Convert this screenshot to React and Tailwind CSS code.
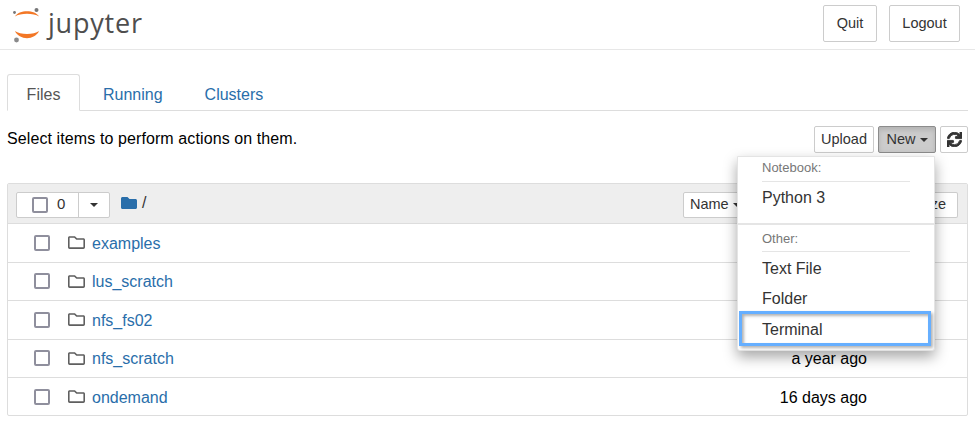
import { FaFolder, FaRegFolder, FaSync } from 'react-icons/fa';

const FOLDERS = [
  { name: 'examples' },
  { name: 'lus_scratch' },
  { name: 'nfs_fs02' },
  { name: 'nfs_scratch', modified: 'a year ago' },
  { name: 'ondemand', modified: '16 days ago' },
];

function Caret() {
  return (
    <span className="inline-block w-0 h-0 border-x-[4.5px] border-x-transparent border-t-[4.5px] border-t-current" />
  );
}

function Checkbox({ className = '' }) {
  return (
    <input
      type="checkbox"
      className={`appearance-none block w-4 h-4 border-2 border-[#8f8f9d] rounded-[2px] bg-white ${className}`}
    />
  );
}

function Logo() {
  return (
    <div className="flex items-center h-full">
      <svg className="w-[30px] h-[37px] ml-3 shrink-0" viewBox="12 5 30 37">
        <path d="M15 15.5 C19 8.5 35 8.5 39 15.5 C34 11.8 20 11.8 15 15.5 Z" fill="#f37726" />
        <path d="M15 30 C20 34 34 34 39 30 C35 39.5 19 39.5 15 30 Z" fill="#f37726" />
        <circle cx="36.5" cy="9" r="2" fill="#767677" />
        <circle cx="14.5" cy="11.5" r="1.4" fill="#767677" />
        <circle cx="16.5" cy="39" r="2.4" fill="#8a8a8b" />
      </svg>
      <span className="ml-[6px] -mt-[4px] font-['Open_Sans',sans-serif] text-[27px] leading-none tracking-[0.8px] text-[#4e4e4e]">
        jupyter
      </span>
    </div>
  );
}

function NewMenu() {
  return (
    <div className="absolute left-[737px] top-[156px] w-[198px] h-[195px] bg-white border border-[#e4e4e4] rounded-b-[3px] shadow-[0_6px_14px_rgba(0,0,0,0.35)] z-10">
      <div className="px-6 h-[24px] pt-[2px] text-[13px] leading-[18px] text-[#777]">Notebook:</div>
      <div className="mx-6 border-t border-[#e5e5e5]" />
      <div className="px-6 h-[41px] pt-[5px] text-[16px] leading-[22px] text-[#333]">Python 3</div>
      <div className="border-t-2 border-[#e5e5e5]" />
      <div className="px-6 h-[26px] pt-[5px] text-[13px] leading-[18px] text-[#777]">Other:</div>
      <div className="mx-6 border-t border-[#e5e5e5]" />
      <div className="px-6 h-[30px] pt-[6px] text-[16px] leading-[22px] text-[#333]">Text File</div>
      <div className="px-6 h-[29px] pt-[6px] text-[16px] leading-[22px] text-[#333]">Folder</div>
      <div className="ml-[1px] w-[192px] h-[35px] pl-[20px] pt-[5px] border-[3px] border-[#66afff] text-[16px] leading-[22px] text-[#333] shadow-[inset_2px_2px_3px_rgba(0,0,0,0.3),2px_2px_3px_rgba(0,0,0,0.3)]">
        Terminal
      </div>
    </div>
  );
}

export default function App() {
  return (
    <div className="relative w-[975px] h-[429px] overflow-hidden bg-white font-['Liberation_Sans',Arial,sans-serif] text-[16px] text-black">
      {/* Header */}
      <div className="flex items-start justify-between h-[50px] border-b border-[#e7e7e7]">
        <Logo />
        <div className="flex gap-3 mt-[5px] mr-[15px]">
          <button className="w-[54px] h-[37px] bg-white border border-[#ccc] rounded-[2px] text-[14.5px] text-[#333]">Quit</button>
          <button className="w-[71px] h-[37px] bg-white border border-[#ccc] rounded-[2px] text-[14.5px] text-[#333]">Logout</button>
        </div>
      </div>

      {/* Tabs */}
      <div className="flex mx-[7px] mt-[24px] h-[37px] border-b border-[#ddd]">
        <div className="w-[73px] h-[37px] pt-[4px] bg-white border border-[#ddd] border-b-white rounded-t-[3px] flex items-center justify-center text-[#555]">
          Files
        </div>
        <div className="ml-[2px] px-[21px] pt-[5px] flex items-center text-[#296eaa]">Running</div>
        <div className="px-[21px] pt-[5px] flex items-center text-[#296eaa]">Clusters</div>
      </div>

      {/* Toolbar */}
      <div className="flex items-start justify-between mx-[7px] mt-[15px] h-[28px]">
        <p className="mt-[3px] leading-[20px] tracking-[0.1px]">Select items to perform actions on them.</p>
        <div className="flex gap-[4px]">
          <button className="w-[60px] h-[27px] bg-white border border-[#ccc] rounded-[2px] text-[14.5px] text-[#333]">Upload</button>
          <button className="w-[58px] h-[27px] flex items-center justify-center gap-[4px] bg-[#ccc] border border-[#8c8c8c] rounded-[2px] text-[14.5px] text-[#333] shadow-[inset_0_3px_5px_rgba(0,0,0,0.125)]">
            New <Caret />
          </button>
          <button className="w-[28px] h-[27px] flex items-center justify-center bg-white border border-[#ccc] rounded-[2px] text-[#333]">
            <FaSync className="w-[15px] h-[15px] stroke-[30px]" />
          </button>
        </div>
      </div>

      {/* File list */}
      <div className="mx-[7px] mt-[29px] h-[233px] border border-[#ddd] rounded-[2px]">
        <div className="flex items-center h-[39px] pt-[2px] bg-[#eee] pl-[8px] pr-[9px]">
          <div className="flex h-[26px] bg-white border border-[#ccc] rounded-[2px]">
            <div className="flex items-center w-[62px] border-r border-[#ccc] pl-[15px] gap-[9px] text-[#333]">
              <Checkbox />
              <span className="text-[15px]">0</span>
            </div>
            <div className="flex items-center justify-center w-[30px] text-[#333]">
              <Caret />
            </div>
          </div>
          <FaFolder className="ml-[11px] -mt-[4px] w-[16px] h-[16px] text-[#296eaa]" />
          <span className="ml-[5px] -mt-[4px] text-[#333]">/</span>
          <div className="ml-auto flex h-[26px]">
            <button className="w-[82px] bg-white border border-[#ccc] rounded-[2px] flex items-center pl-[6px] gap-[4px] text-[#333] text-[14.5px]">
              Name <Caret />
            </button>
            <div className="w-[113px] bg-white border border-[#ccc] border-l-0" />
            <button className="w-[80px] bg-white border border-[#ccc] border-l-0 rounded-[2px] pr-[11px] text-right text-[#333] text-[14.5px]">File size</button>
          </div>
        </div>
        {FOLDERS.map((folder) => (
          <div key={folder.name} className="flex items-center h-[38.5px] border-t border-[#ddd]">
            <Checkbox className="ml-[26px]" />
            <FaRegFolder className="ml-[18px] w-[17px] h-[17px] text-[#5f5f5f]" />
            <a className="ml-[7px] mt-[2px] text-[#296eaa]">{folder.name}</a>
            {folder.modified && <span className="ml-auto mr-[100px] mt-[2px]">{folder.modified}</span>}
          </div>
        ))}
      </div>

      <NewMenu />
    </div>
  );
}
